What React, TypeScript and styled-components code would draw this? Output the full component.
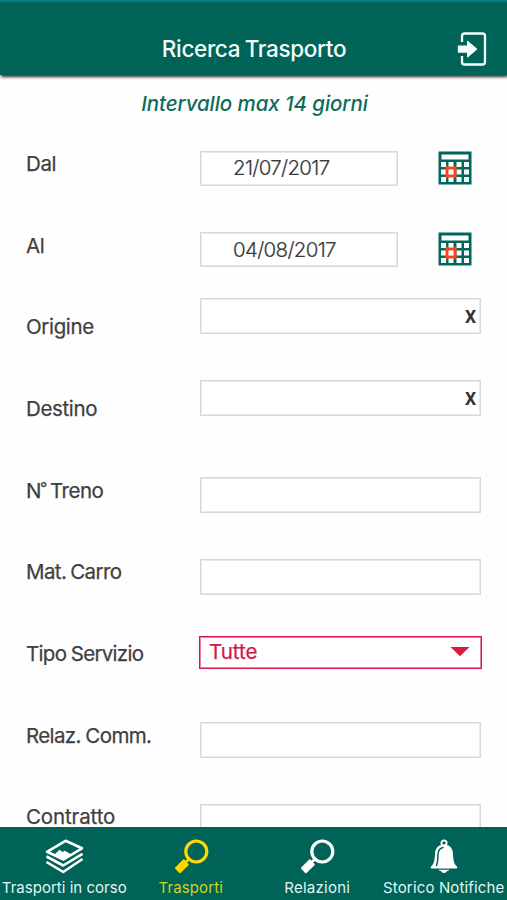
import React from "react";
import styled, { createGlobalStyle } from "styled-components";

const GREEN = "#006357";
const RED = "#d5184b";

const GlobalStyle = createGlobalStyle`
  * { box-sizing: border-box; }
  body {
    margin: 0;
    background: #fefefe;
    overflow: hidden;
    font-family: Inter, Roboto, sans-serif;
  }
`;

const Screen = styled.div`
  width: 507px;
  height: 900px;
  display: flex;
  flex-direction: column;
  overflow: hidden;
`;

const Header = styled.header`
  flex: none;
  height: 75px;
  padding: 20px 20px 0 0;
  display: grid;
  grid-template-columns: 50px 1fr 30px;
  align-items: center;
  background: ${GREEN};
  border-top: 2px solid #00808f;
  box-shadow: 1px 2px 3px rgba(20, 0, 0, 0.85);
`;

const Title = styled.h1`
  grid-column: 2;
  margin: 0;
  padding: 1px 0 0 1px;
  text-align: center;
  font-size: 22.5px;
  font-weight: 500;
  line-height: 28px;
  letter-spacing: -0.35px;
  word-spacing: -1px;
  color: #f4fcfb;
`;

const IconButton = styled.button`
  display: flex;
  padding: 0;
  border: 0;
  background: none;
`;

const Note = styled.p`
  flex: none;
  height: 48px;
  margin: 0;
  padding: 16px 0 0 2px;
  text-align: center;
  font-size: 20.5px;
  font-style: italic;
  font-weight: 500;
  line-height: 26px;
  letter-spacing: -0.07px;
  color: #0d6b5b;
`;

const Form = styled.form`
  flex: 1;
  min-height: 0;
  overflow: hidden;
`;

const Row = styled.div`
  display: grid;
  grid-template-columns: 174px 1fr;
  height: 81.66px;
  padding-left: 26px;
`;

const Label = styled.label<{ $spacing?: number; $word?: number }>`
  padding-top: 28px;
  font-size: 20.5px;
  line-height: 26px;
  letter-spacing: ${(p) => p.$spacing ?? 0}px;
  word-spacing: ${(p) => p.$word ?? 0}px;
  white-space: nowrap;
  color: #3f3f41;
  -webkit-text-stroke: 0.25px #3f3f41;
`;

const Degree = styled.span`
  margin-left: -1px;
  font-size: 16px;
  line-height: 1;
  letter-spacing: -1.5px;
  vertical-align: 4px;
`;

const Control = styled.div<{ $top: number }>`
  display: flex;
  align-items: flex-start;
  padding-top: ${(p) => p.$top}px;
`;

const Field = styled.div<{ $date?: boolean }>`
  display: flex;
  align-items: center;
  justify-content: ${(p) => (p.$date ? "flex-start" : "flex-end")};
  width: ${(p) => (p.$date ? 198 : 281)}px;
  height: ${(p) => (p.$date ? 35 : 36)}px;
  padding: ${(p) => (p.$date ? "0 0 1px 32px" : "2px 4px 0 0")};
  border: 1px solid #d9d9d9;
  box-shadow: inset 0 0 0 1px #e9e9e9;
  background: #fff;
`;

const DateValue = styled.span<{ $spacing: number }>`
  font-size: 20.5px;
  font-weight: 300;
  letter-spacing: ${(p) => p.$spacing}px;
  color: #3a3a3a;
  -webkit-text-stroke: 0.2px #3a3a3a;
`;

const Clear = styled.button`
  padding: 0;
  border: 0;
  background: none;
  font: 700 17.5px/24px Roboto, Inter, sans-serif;
  color: #333;
`;

const CalendarButton = styled(IconButton)`
  margin-left: 40px;
`;

const Select = styled.div`
  display: flex;
  align-items: center;
  justify-content: space-between;
  width: 283px;
  height: 33px;
  margin-left: -1px;
  padding: 0 11px 1px 9px;
  border: 1px solid ${RED};
  box-shadow: inset 0 0 0 1px rgba(213, 24, 75, 0.55);
  background: #fff;
  font-size: 20.5px;
  letter-spacing: 0;
  color: #cf1848;
  -webkit-text-stroke: 0.25px #cf1848;
`;

const TabBar = styled.nav`
  flex: none;
  height: 73px;
  display: grid;
  grid-template-columns: repeat(4, 1fr);
  padding-left: 1px;
  background: ${GREEN};
`;

const Tab = styled.a<{ $active?: boolean }>`
  display: flex;
  flex-direction: column;
  align-items: center;
  min-width: 0;
  padding-top: 12px;
  gap: 3px;
  color: ${(p) => (p.$active ? "#ffd800" : "#ffffff")};
`;

const TabLabel = styled.span<{ $active?: boolean; $spacing: number }>`
  font-size: 15px;
  line-height: 20px;
  letter-spacing: ${(p) => p.$spacing}px;
  white-space: nowrap;
  color: ${(p) => (p.$active ? "#ccd421" : "#e1f5f0")};
`;

const ExitIcon = () => (
  <svg width="30" height="34" viewBox="0 0 30 34">
    <path d="M5 10V4q0-2.500 2.500-2.500h18q2.500 0 2.500 2.500v26q0 2.500-2.500 2.500h-18Q5 32.500 5 30v-6" fill="none" stroke="#f4fffd" strokeWidth="2.300" />
    <path d="M1.500 13.500h8.500V9.500q0-1.300 1-.5l8.800 7.500q.7.600 0 1.200l-8.800 7.500q-1 .8-1-.5v-4H1.500q-.7 0-.7-.7v-5.800q0-.7.700-.7z" fill="#f8fffe" />
  </svg>
);

const CalendarIcon = () => (
  <svg width="34" height="34" viewBox="0 0 34 34">
    <rect x="0.500" y="0.500" width="33" height="33" fill="#00675c" />
    <rect x="3.500" y="3.500" width="27" height="5" fill="#fff" />
    {[11, 18.5, 26].map((y) =>
      [3, 10.5, 18.5, 26].map((x) => (
        <rect key={`${x}-${y}`} x={x} y={y} width="5" height="5" fill="#fff" />
      )),
    )}
    <rect x="9" y="17" width="8" height="8" fill="#fff" stroke="#fb4518" strokeWidth="2.800" />
    <path d="M9 14.500v2M17 14.500v2M9 25.500v2M17 25.500v2M6.500 17h2M6.500 25h2M17.500 17h2M17.500 25h2" stroke="#fb4518" strokeWidth="1.200" />
  </svg>
);

const LayersIcon = () => (
  <svg width="40" height="36" viewBox="0 0 40 36" fill="none" stroke="currentColor" strokeWidth="2.600" strokeLinejoin="round">
    <path d="M3 12.800L21.500 1.800 38 9.300 19.500 20.500z" />
    <path d="M2.500 17.500l16.700 9L38.500 14.800M2.500 23l16.700 10L38.500 20" />
    <path d="M10.500 15.500l5-4.800 3.200 2.300 2-1.200 6.800 3.700-8 4z" fill="currentColor" stroke="none" />
  </svg>
);

const SearchIcon = () => (
  <svg width="36" height="36" viewBox="0 0 36 36" fill="none" stroke="currentColor">
    <circle cx="23.300" cy="12.500" r="10.500" strokeWidth="3.200" />
    <path d="M16 20l-3 3" strokeWidth="2.500" />
    <path d="M11.500 20.500l4 4.500q.6.700 0 1.300l-8 7.700q-.7.600-1.300 0l-4-4.300q-.6-.7 0-1.300l8-7.900q.7-.6 1.300 0z" fill="currentColor" stroke="none" />
  </svg>
);

const BellIcon = () => (
  <svg width="30" height="36" viewBox="0 0 30 36">
    <circle cx="15" cy="4" r="2.600" fill="none" stroke="currentColor" strokeWidth="1.900" />
    <path d="M15 5.500C9 5.500 6.300 9.700 6 14.500c-.3 7-1 10.500-4 13q-.8 2 .5 2h25q1.300 0 .5-2c-3-2.500-3.700-6-4-13-.3-4.800-3-9-9-9z" fill="currentColor" />
    <path d="M7.500 26.500c1.500-3.500 1.300-7.500 1.500-11.500.2-4 1.500-5.500 5-6.500" fill="none" stroke={GREEN} strokeWidth="1.500" strokeLinecap="round" />
    <path d="M9.500 30.700h11c-.8 1-2 1.300-2.700 1.500-.5 2.300-5.100 2.300-5.600 0-.7-.2-1.900-.5-2.700-1.500z" fill="currentColor" />
  </svg>
);

const Arrow = () => (
  <svg width="20" height="10" viewBox="0 0 20 10">
    <path d="M0.500 0h19L10 9.300z" fill="#db1a38" />
  </svg>
);

const dates = [
  { label: "Dal", value: "21/07/2017", spacing: -0.7, labelSpacing: -0.4 },
  { label: "Al", value: "04/08/2017", spacing: -0.7, labelSpacing: -0.5 },
];

const tabs = [
  { label: "Trasporti in corso", spacing: 0.02, icon: <LayersIcon /> },
  { label: "Trasporti", spacing: 0.1, icon: <SearchIcon />, active: true },
  { label: "Relazioni", spacing: 0.25, icon: <SearchIcon /> },
  { label: "Storico Notifiche", spacing: 0.15, icon: <BellIcon /> },
];

export default function App() {
  return (
    <>
      <GlobalStyle />
      <Screen>
        <Header>
          <Title>Ricerca Trasporto</Title>
          <IconButton type="button" aria-label="Esci">
            <ExitIcon />
          </IconButton>
        </Header>
        <Note>Intervallo max 14 giorni</Note>
        <Form>
          {dates.map((d) => (
            <Row key={d.label}>
              <Label $spacing={d.labelSpacing}>{d.label}</Label>
              <Control $top={27.7}>
                <Field $date>
                  <DateValue $spacing={d.spacing}>{d.value}</DateValue>
                </Field>
                <CalendarButton type="button" aria-label="Calendario">
                  <CalendarIcon />
                </CalendarButton>
              </Control>
            </Row>
          ))}
          {["Origine", "Destino"].map((name) => (
            <Row key={name}>
              <Label $spacing={-0.35}>{name}</Label>
              <Control $top={11.7}>
                <Field>
                  <Clear type="button">X</Clear>
                </Field>
              </Control>
            </Row>
          ))}
          <Row>
            <Label $spacing={-0.5} $word={-1}>
              N<Degree>°</Degree> Treno
            </Label>
            <Control $top={27.7}>
              <Field />
            </Control>
          </Row>
          <Row>
            <Label $spacing={-0.6} $word={-1.2}>Mat. Carro</Label>
            <Control $top={27.7}>
              <Field />
            </Control>
          </Row>
          <Row>
            <Label $spacing={-0.7} $word={-0.6}>Tipo Servizio</Label>
            <Control $top={22.7}>
              <Select>
                Tutte
                <Arrow />
              </Select>
            </Control>
          </Row>
          <Row>
            <Label $spacing={-0.62} $word={-0.6}>Relaz. Comm.</Label>
            <Control $top={27.7}>
              <Field />
            </Control>
          </Row>
          <Row>
            <Label $spacing={-0.12}>Contratto</Label>
            <Control $top={27.7}>
              <Field />
            </Control>
          </Row>
        </Form>
        <TabBar>
          {tabs.map((t) => (
            <Tab key={t.label} $active={t.active}>
              {t.icon}
              <TabLabel $active={t.active} $spacing={t.spacing}>
                {t.label}
              </TabLabel>
            </Tab>
          ))}
        </TabBar>
      </Screen>
    </>
  );
}
